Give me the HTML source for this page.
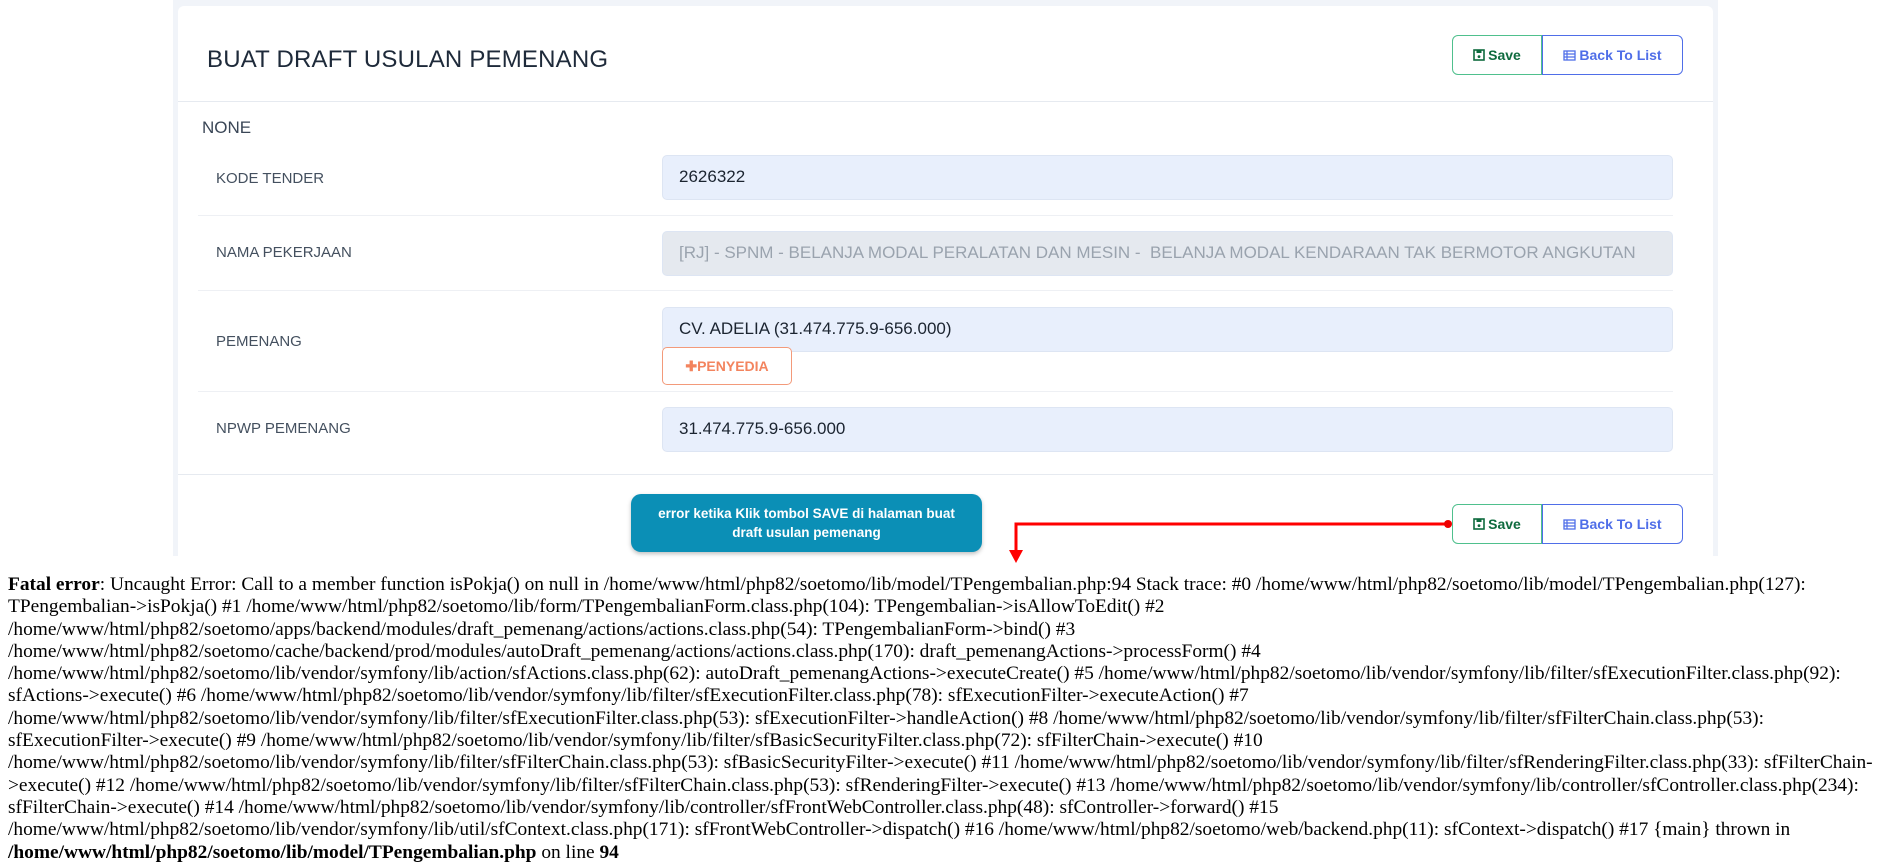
<!DOCTYPE html>
<html><head><meta charset="utf-8"><style>
*{box-sizing:border-box}
body{margin:0;width:1894px;height:860px;overflow:hidden;background:#fff;font-family:"Liberation Sans",sans-serif;position:relative}
.wrap{position:absolute;left:173px;top:0;width:1545px;height:556px;background:#f1f4f9}
.card{position:absolute;left:5px;top:6px;width:1535px;height:560px;background:#fff;border-radius:6px}
.abs{position:absolute}
.title{left:29px;top:40px;font-size:24px;color:#1e2a3a;letter-spacing:.2px}
.hr{left:0;width:1535px;height:1px;background:#e6eaf0}
.btns{width:231px;height:40px;display:flex;font-weight:bold;font-size:14px}
.bs{width:90px;border:1px solid #4fc08d;border-radius:6px 0 0 6px;color:#0e6b3e;display:flex;align-items:center;justify-content:center;gap:3px}
.bb{flex:1;border:1px solid #4f6ee8;border-radius:0 6px 6px 0;color:#4f6ee8;display:flex;align-items:center;justify-content:center;gap:3px}
.lbl{font-size:15px;color:#44505f;left:38px}
.inp{left:484px;width:1011px;height:45px;border-radius:5px;background:#e8effc;border:1px solid #dde5f3;font-size:17px;color:#1b2430;padding:11px 16px}
.rd{left:20px;width:1475px;height:1px;background:#eef0f4}
.tip{left:631px;top:494px;width:351px;height:58px;background:#0b8fb6;border-radius:10px;color:#fff;font-weight:bold;font-size:13.5px;text-align:center;line-height:19px;padding-top:10px;box-shadow:0 2px 4px rgba(0,0,0,.25)}
.err{position:absolute;left:8px;top:574px;width:1880px;font-family:"Liberation Serif",serif;font-size:19.4px;line-height:22.3px;color:#000}
</style></head><body>
<div class="wrap"><div class="card">
<div class="abs title">BUAT DRAFT USULAN PEMENANG</div>
<div class="abs btns" style="left:1274px;top:29px">
<div class="bs"><svg width="12" height="12" viewBox="0 0 12 12"><rect x="1" y="1" width="10" height="10" fill="none" stroke="#0e6b3e" stroke-width="1.6"/><rect x="3.5" y="1" width="5" height="3" fill="#0e6b3e"/><circle cx="6" cy="7.6" r="1.4" fill="#0e6b3e"/></svg>Save</div>
<div class="bb"><svg width="13" height="11" viewBox="0 0 13 11"><rect x="1" y="1" width="11" height="9" fill="none" stroke="#4f6ee8" stroke-width="1.3"/><path d="M1 4h11M1 7h11M4 1v9" stroke="#4f6ee8" stroke-width="1.2"/></svg>Back To List</div>
</div>
<div class="abs hr" style="top:95px"></div>
<div class="abs" style="left:24px;top:112px;font-size:17px;color:#3a4656">NONE</div>
<div class="abs lbl" style="top:164px">KODE TENDER</div>
<div class="abs inp" style="top:149px">2626322</div>
<div class="abs rd" style="top:209px"></div>
<div class="abs lbl" style="top:238px">NAMA PEKERJAAN</div>
<div class="abs inp" style="top:225px;background:#e5e9ef;color:#9aa3ae">[RJ] - SPNM - BELANJA MODAL PERALATAN DAN MESIN -&nbsp; BELANJA MODAL KENDARAAN TAK BERMOTOR ANGKUTAN</div>
<div class="abs rd" style="top:284px"></div>
<div class="abs lbl" style="top:327px">PEMENANG</div>
<div class="abs inp" style="top:301px">CV. ADELIA (31.474.775.9-656.000)</div>
<div class="abs" style="left:484px;top:341px;width:130px;height:38px;border:1px solid #f39a7a;border-radius:5px;background:#fff;color:#f3845e;font-weight:bold;font-size:14px;display:flex;align-items:center;justify-content:center">✚PENYEDIA</div>
<div class="abs rd" style="top:385px"></div>
<div class="abs lbl" style="top:414px">NPWP PEMENANG</div>
<div class="abs inp" style="top:401px">31.474.775.9-656.000</div>
<div class="abs hr" style="top:468px"></div>
<div class="abs btns" style="left:1274px;top:498px">
<div class="bs"><svg width="12" height="12" viewBox="0 0 12 12"><rect x="1" y="1" width="10" height="10" fill="none" stroke="#0e6b3e" stroke-width="1.6"/><rect x="3.5" y="1" width="5" height="3" fill="#0e6b3e"/><circle cx="6" cy="7.6" r="1.4" fill="#0e6b3e"/></svg>Save</div>
<div class="bb"><svg width="13" height="11" viewBox="0 0 13 11"><rect x="1" y="1" width="11" height="9" fill="none" stroke="#4f6ee8" stroke-width="1.3"/><path d="M1 4h11M1 7h11M4 1v9" stroke="#4f6ee8" stroke-width="1.2"/></svg>Back To List</div>
</div>
</div></div>
<div class="abs" style="left:0;top:556px;width:1894px;height:304px;background:#fff"></div>
<div class="abs tip">error ketika Klik tombol SAVE di halaman buat<br>draft usulan pemenang</div>
<svg class="abs" style="left:1000px;top:515px" width="460" height="50"><path d="M448 9H16V38" fill="none" stroke="#f00" stroke-width="3"/><path d="M9 35h14l-7 13z" fill="#f00"/><circle cx="448" cy="9" r="4" fill="#e00"/></svg>
<div class="err"><b>Fatal error</b>: Uncaught Error: Call to a member function isPokja() on null in /home/www/html/php82/soetomo/lib/model/TPengembalian.php:94 Stack trace: #0 /home/www/html/php82/soetomo/lib/model/TPengembalian.php(127): TPengembalian-&gt;isPokja() #1 /home/www/html/php82/soetomo/lib/form/TPengembalianForm.class.php(104): TPengembalian-&gt;isAllowToEdit() #2 /home/www/html/php82/soetomo/apps/backend/modules/draft_pemenang/actions/actions.class.php(54): TPengembalianForm-&gt;bind() #3 /home/www/html/php82/soetomo/cache/backend/prod/modules/autoDraft_pemenang/actions/actions.class.php(170): draft_pemenangActions-&gt;processForm() #4 /home/www/html/php82/soetomo/lib/vendor/symfony/lib/action/sfActions.class.php(62): autoDraft_pemenangActions-&gt;executeCreate() #5 /home/www/html/php82/soetomo/lib/vendor/symfony/lib/filter/sfExecutionFilter.class.php(92): sfActions-&gt;execute() #6 /home/www/html/php82/soetomo/lib/vendor/symfony/lib/filter/sfExecutionFilter.class.php(78): sfExecutionFilter-&gt;executeAction() #7 /home/www/html/php82/soetomo/lib/vendor/symfony/lib/filter/sfExecutionFilter.class.php(53): sfExecutionFilter-&gt;handleAction() #8 /home/www/html/php82/soetomo/lib/vendor/symfony/lib/filter/sfFilterChain.class.php(53): sfExecutionFilter-&gt;execute() #9 /home/www/html/php82/soetomo/lib/vendor/symfony/lib/filter/sfBasicSecurityFilter.class.php(72): sfFilterChain-&gt;execute() #10 /home/www/html/php82/soetomo/lib/vendor/symfony/lib/filter/sfFilterChain.class.php(53): sfBasicSecurityFilter-&gt;execute() #11 /home/www/html/php82/soetomo/lib/vendor/symfony/lib/filter/sfRenderingFilter.class.php(33): sfFilterChain-&gt;execute() #12 /home/www/html/php82/soetomo/lib/vendor/symfony/lib/filter/sfFilterChain.class.php(53): sfRenderingFilter-&gt;execute() #13 /home/www/html/php82/soetomo/lib/vendor/symfony/lib/controller/sfController.class.php(234): sfFilterChain-&gt;execute() #14 /home/www/html/php82/soetomo/lib/vendor/symfony/lib/controller/sfFrontWebController.class.php(48): sfController-&gt;forward() #15 /home/www/html/php82/soetomo/lib/vendor/symfony/lib/util/sfContext.class.php(171): sfFrontWebController-&gt;dispatch() #16 /home/www/html/php82/soetomo/web/backend.php(11): sfContext-&gt;dispatch() #17 {main} thrown in <b>/home/www/html/php82/soetomo/lib/model/TPengembalian.php</b> on line <b>94</b></div>
</body></html>
